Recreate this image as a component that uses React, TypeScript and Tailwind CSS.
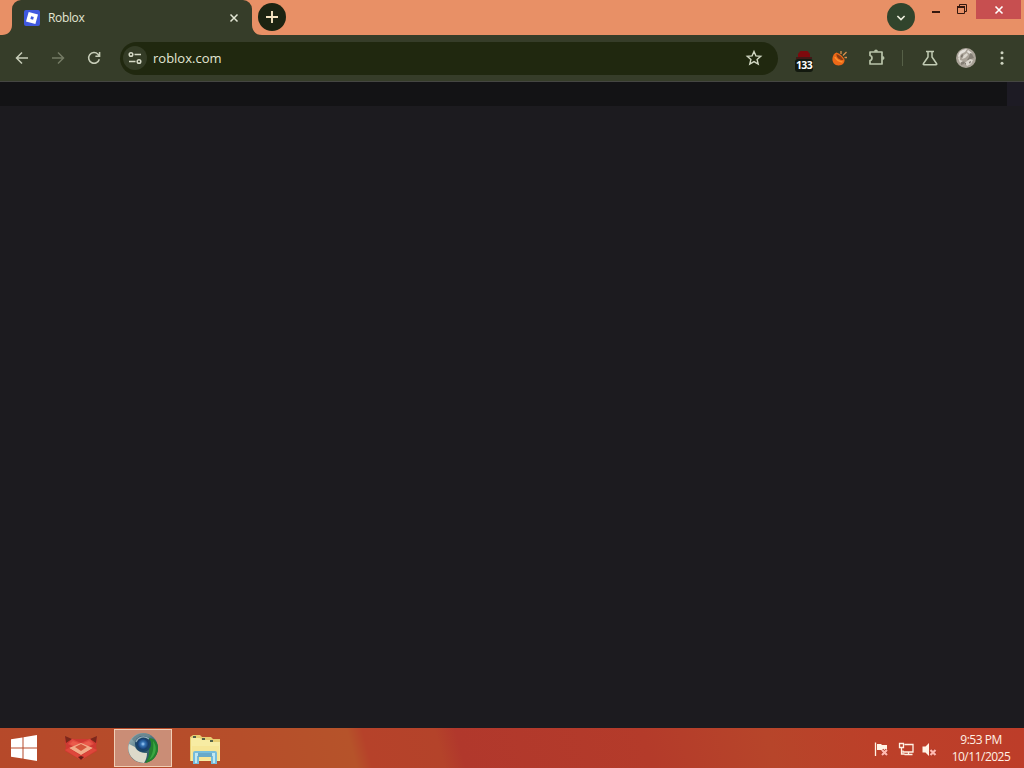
import type { ReactNode } from 'react'

function RobloxIcon() {
  return (
    <svg width="16" height="16" viewBox="0 0 16 16">
      <rect width="16" height="16" rx="2" fill="#3f58df" />
      <path fillRule="evenodd" fill="#fff" d="M4.700 2 14 4.600 11.400 14 2 11.400ZM7.100 6.300 6.400 9 9.100 9.700 9.800 7Z" />
    </svg>
  )
}

function TabStrip() {
  return (
    <div className="flex h-[35px] bg-[#e89066]">
      <div className="flex w-3 items-end">
        <svg width="12" height="10" viewBox="0 0 12 10"><path d="M12 0v10H2C8 10 12 6 12 0Z" fill="#363d29" /></svg>
      </div>
      <div className="flex w-60 items-center rounded-t-[9px] bg-[#363d29] pl-3">
        <RobloxIcon />
        <span className="ml-2 w-[178px] text-[12px] leading-4 tracking-[-0.35px] text-[#e3e6d4]">Roblox</span>
        <svg width="16" height="16" viewBox="0 0 16 16" stroke="#e3e6d4" strokeWidth="1.5"><path d="m4.500 4.500 7 7m0-7-7 7" /></svg>
      </div>
      <div className="flex w-1.5 items-end">
        <svg className="shrink-0 overflow-visible" width="6" height="10" viewBox="0 0 6 10"><path d="M0 0v10h10C4 10 0 6 0 0Z" fill="#363d29" /></svg>
      </div>
      <div className="mt-[3px] flex h-7 w-7 items-center justify-center rounded-full bg-[#1c2412]">
        <svg width="14" height="14" viewBox="0 0 14 14" stroke="#f4e5c2" strokeWidth="1.9"><path d="M7 1v12M1 7h12" /></svg>
      </div>
      <div className="flex-1" />
      <div className="mt-[3px] flex h-7 w-7 items-center justify-center rounded-full bg-[#31442c]">
        <svg width="12" height="12" viewBox="0 0 12 12" fill="none" stroke="#eef0df" strokeWidth="1.6"><path d="m2.400 5 3.600 3.600L9.600 5" /></svg>
      </div>
      <div className="ml-[8px] flex h-[19px] w-[53px]">
        <svg width="53" height="19" viewBox="0 0 53 19" fill="none" stroke="#35180e">
          <path d="M9 12h8" strokeWidth="2" />
          <path d="M34.500 6.500h7v7h-7ZM36.500 6V4.500h7v7h-2" strokeWidth="1" />
          <path d="M34 7h8" strokeWidth="2" />
        </svg>
      </div>
      <div className="mr-[3px] flex h-[19px] w-[45px] items-center justify-center bg-[#c74f50]">
        <svg width="10" height="10" viewBox="0 0 10 10" stroke="#fff" strokeWidth="1.6"><path d="m1.500 1.500 7 7m0-7-7 7" /></svg>
      </div>
    </div>
  )
}

function ToolIcon({ children, dim = false }: { children: ReactNode; dim?: boolean }) {
  return (
    <svg className={dim ? 'mr-4 shrink-0 text-[#747b64]' : 'mr-4 shrink-0 text-[#c7cdb8]'} width="20" height="20" viewBox="0 0 20 20" fill="none" stroke="currentColor" strokeWidth="1.5">
      {children}
    </svg>
  )
}

function BlockerIcon() {
  return (
    <div className="flex w-5 shrink-0 flex-col items-center pt-[5px]">
      <svg width="18" height="9" viewBox="0 0 18 9"><path d="M3 7V4l2.500-3h7L15 4v3Z" fill="#7d090d" /><path d="M1 7h16v2H1Z" fill="#421917" /></svg>
      <span className="h-[13px] w-[18px] rounded-[3px] bg-[#13190f] text-center text-[10.5px] leading-[12px] font-bold tracking-[-0.7px] text-white">133</span>
    </div>
  )
}

function Avatar() {
  return (
    <svg className="ml-4 shrink-0" width="20" height="20" viewBox="0 0 20 20">
      <circle cx="10" cy="10" r="10" fill="#aaa398" />
      <path d="M3 5c2-3 5-4 8-4l-2 3-4 2-2 4-1-2ZM12 2l4 3-2 1-3-2Z" fill="#e5e1da" />
      <path d="m14 5 2 1 2 4-3 1-2 2-2-1 2-3ZM5 13l4 1-1 2-3 1Z" fill="#857f75" />
      <path d="m8 7 3-2 1 2-3 3-3 1Zm3 6 3-2 3 1-2 4-4 2-2-3ZM2 10l2-1v3l3 1-3 2Z" fill="#dcd7ce" />
      <path d="m5 8 2-2-1 4Zm8 6 2-1-1 3Zm-4 1h1v2Z" fill="#69635a" />
    </svg>
  )
}

function Toolbar() {
  return (
    <div className="flex h-[47px] items-center border-b border-[#454642] bg-[#363d29] pl-3">
      <ToolIcon><path d="M16 10H4.800M10 4.500 4.500 10l5.500 5.500" /></ToolIcon>
      <ToolIcon dim><path d="M4 10h11.200M10 4.500l5.500 5.500-5.500 5.500" /></ToolIcon>
      <ToolIcon><path d="M15.300 11.200A5.400 5.400 0 1 1 14 6.200l1.500 1.700M15.600 4v4.200h-4.200" /></ToolIcon>
      <div className="flex h-[33px] w-[658px] shrink-0 items-center rounded-full bg-[#20280f]">
        <div className="ml-[3px] flex h-6 w-6 items-center justify-center rounded-full bg-[#343c26]">
          <svg width="16" height="16" viewBox="0 0 16 16" fill="none" stroke="#d5d9c6" strokeWidth="1.5">
            <circle cx="4" cy="4.500" r="1.800" /><path d="M7.500 4.500H14M2 11.500h6.500" /><circle cx="12" cy="11.500" r="1.800" />
          </svg>
        </div>
        <span className="ml-1.5 flex-1 text-[13px] leading-5 text-[#e3e6d4]">roblox.com</span>
        <svg className="mr-[15px]" width="18" height="18" viewBox="0 0 18 18" fill="none" stroke="#d1d7c3" strokeWidth="1.400">
          <path d="m9 2.500 1.900 4.400 4.800.4-3.600 3.100 1.100 4.700L9 12.600l-4.200 2.500 1.100-4.700-3.600-3.100 4.800-.4Z" />
        </svg>
      </div>
      <div className="ml-4"><BlockerIcon /></div>
      <svg className="ml-4 shrink-0" width="20" height="20" viewBox="0 0 20 20">
        <path d="M6.500 4.500c3 1 6 3.500 8 7 .5 3-2 6-6 6-4 0-6.500-3-6-7.500.3-2.500 1.800-5 4-5.500Z" fill="#ed6918" />
        <path d="M6.500 6c3 1 5.500 3 7 6-3 .5-7.500-2-7-6Z" fill="#8a3c14" />
        <path d="M5 9c1.500 3 4 4.500 7.500 5" fill="none" stroke="#ff912f" strokeWidth="1.600" />
        <path d="M11 6V3M13 7.500l3.500-3.500M14.500 9.500H17" stroke="#d98f4c" strokeWidth="1.300" />
      </svg>
      <svg className="ml-4 shrink-0" width="20" height="20" viewBox="0 0 20 20" fill="none" stroke="#b9c4a9" strokeWidth="1.700" strokeLinejoin="round">
        <path d="M4 4h12v12H4v-3.500c2.600-.5 2.600-4.500 0-5Z" />
        <path d="M8.300 3.500a1.700 1.700 0 0 1 3.400 0ZM16.500 8.300a1.700 1.700 0 0 1 0 3.400Z" fill="#b9c4a9" strokeWidth=".5" />
      </svg>
      <div className="ml-4 h-4 w-px shrink-0 bg-[#566047]" />
      <svg className="ml-[17px] shrink-0" width="20" height="20" viewBox="0 0 20 20" fill="none" stroke="#c1cbb3" strokeWidth="1.500" strokeLinejoin="round">
        <path d="M6 3.500h8M8 4v5l-4.500 6.500q-.8 1.200.6 1.200h11.800q1.400 0 .6-1.200L12 9V4" />
      </svg>
      <Avatar />
      <svg className="ml-4 shrink-0" width="20" height="20" viewBox="0 0 20 20" fill="#cdd3bf"><circle cx="10" cy="4.700" r="1.500" /><circle cx="10" cy="10" r="1.500" /><circle cx="10" cy="15.300" r="1.500" /></svg>
    </div>
  )
}

function FoxIcon() {
  return (
    <svg width="34" height="26" viewBox="0 0 34 26">
      <path d="m1 2 8 2h16l8-2v5l-1 4 1 5-16 9L1 16l1-5-1-4Z" fill="#cf3932" />
      <path d="m1 1 7 3-6 4Zm32 0-7 3 6 4Z" fill="#7b281b" />
      <path d="m8 4 9 4 9-4 4 5-13 7L4 9Z" fill="#e04b41" />
      <path d="m9 6 8 3 8-3 3 3-11 6-11-6Z" fill="#eb5b4b" />
      <path d="m5 13 12-5 12 5-12 7Z" fill="#f2ac89" />
      <path d="m11 12 6-3 6 3-6 4Z" fill="#d4553b" />
      <path d="m1 15 4-2 12 8 12-8 4 2-16 10Z" fill="#de473b" />
      <path d="m14 22 3-1 3 1-3 3Z" fill="#671e16" />
    </svg>
  )
}

function BrowserIcon() {
  return (
    <svg width="32" height="32" viewBox="0 0 32 32">
      <defs>
        <radialGradient id="lens"><stop offset="0" stopColor="#a8d4ff" /><stop offset=".4" stopColor="#3674b6" /><stop offset="1" stopColor="#12396f" /></radialGradient>
        <linearGradient id="rim" x1="0" y1="0" x2="1" y2="1"><stop stopColor="#a9c0c4" /><stop offset=".5" stopColor="#476f7b" /><stop offset="1" stopColor="#173f4c" /></linearGradient>
      </defs>
      <circle cx="16" cy="16" r="15" fill="url(#rim)" />
      <path d="M22 6c5 0 9 4 9 10 0 8-6 14-13 15 3-4 5-9 4-14Z" fill="#22822e" />
      <path d="M26 9c3 4 4 9 1 14-1 2-3 4-5 5 4-6 5-12 4-19Z" fill="#3ba642" />
      <path d="M2 12c2 1 4 2 6 3 2 4 6 6 12 6 0 4-1 7-3 9.900C7 31-1 22 2 12Z" fill="#dddaca" />
      <path d="M5 7C10 1 18 0 24 4l-8 2-7 6Z" fill="#6b8790" />
      <circle cx="16" cy="12" r="8" fill="#1d4568" />
      <path d="M9 10c2-5 8-7 13-3" fill="none" stroke="#93adb8" strokeWidth="1.200" />
      <circle cx="16" cy="12" r="5.500" fill="url(#lens)" />
    </svg>
  )
}

function FolderIcon() {
  return (
    <svg width="34" height="32" viewBox="0 0 34 32">
      <path d="M2 3 5 1h7l2 2h9l2 2h7v22H2Z" fill="#e7ce72" />
      <path d="M3 4h9l2 2h9l2 2h7v19H3Z" fill="#f7eca3" />
      <path d="M4 12h27v14H4Z" fill="#f6e696" />
      <path d="M5 3h3M14 5h3M22 7h3" stroke="#53634a" strokeWidth="1.800" />
      <path d="M5 30V19q0-2 2-2h20q2 0 2 2v11h-6v-7H11v7Z" fill="#76bddc" />
      <path d="M7 29V19h20v10h-2v-7H9v7Z" fill="#c1e7f1" />
      <path d="M10 19h14v4H10Z" fill="#68a9c9" />
    </svg>
  )
}

function Tray() {
  return (
    <svg width="64" height="16" viewBox="0 0 64 16" fill="none" stroke="#fff3e5" strokeWidth="1.300">
      <path d="M1.500 1.500V15" />
      <path d="M3 3h4l1 1h5v6H8L7 9H3Z" fill="#fff3e5" stroke="none" />
      <path d="m8 9 5 5m0-5-5 5" stroke="#a83425" strokeWidth="3.500" />
      <path d="m8 9 5 5m0-5-5 5" stroke="#ffb9b0" strokeWidth="2.200" />
      <path d="M30.500 3.500H39V11H29V9.500M34.500 11v2.500m-4 0h8M25.500 2.500h4v4h-4ZM27.500 6.500V13h3" />
      <path d="M48.500 5.500h3L55 2v13l-3.500-3.500h-3Z" fill="#fff3e5" stroke="none" />
      <path d="m56.500 9 5 5m0-5-5 5" stroke="#a83425" strokeWidth="3.500" />
      <path d="m56.500 9 5 5m0-5-5 5" stroke="#ffb9b0" strokeWidth="2.200" />
    </svg>
  )
}

function Taskbar() {
  return (
    <div className="flex h-10 items-center bg-[linear-gradient(75deg,#b6492a_0%,#b64e2a_24%,#b6532a_34.500%,#b6422a_36%,#b4432a_43%,#b1382c_45%,#b43b2a_63%,#b7452a_75%,#bc4029_85%,#bd3d29_100%)]">
      <svg className="ml-[11px] shrink-0" width="26" height="26" viewBox="0 0 26 26" fill="#fff"><path d="M0 4.200 11.500 2.500v10H0ZM12.500 2.300 26 0v12.500H12.500ZM0 13.500h11.500v10L0 21.800ZM12.500 13.500H26V26l-13.500-2.300Z" /></svg>
      <div className="ml-[27px]"><FoxIcon /></div>
      <div className="ml-4 flex h-[38px] w-[58px] items-center justify-center border border-[#f1cfb6] bg-[#ca8d76]"><BrowserIcon /></div>
      <div className="mt-1 ml-4"><FolderIcon /></div>
      <div className="flex-1" />
      <div className="pt-0.5"><Tray /></div>
      <div className="flex w-[86px] flex-col items-center text-[12px] leading-[17px] tracking-[-0.5px] text-[#fff0e5]">
        <span>9:53 PM</span>
        <span>10/11/2025</span>
      </div>
    </div>
  )
}

export default function App() {
  return (
    <div className="flex h-[768px] w-[1024px] flex-col overflow-hidden bg-[#1c1b1f] font-['Open_Sans','Noto_Sans',sans-serif]">
      <TabStrip />
      <Toolbar />
      <main className="flex-1">
        <div className="flex h-6">
          <div className="w-[1007px] bg-[#131315]" />
          <div className="flex-1 bg-[#1d1b24]" />
        </div>
      </main>
      <Taskbar />
    </div>
  )
}
